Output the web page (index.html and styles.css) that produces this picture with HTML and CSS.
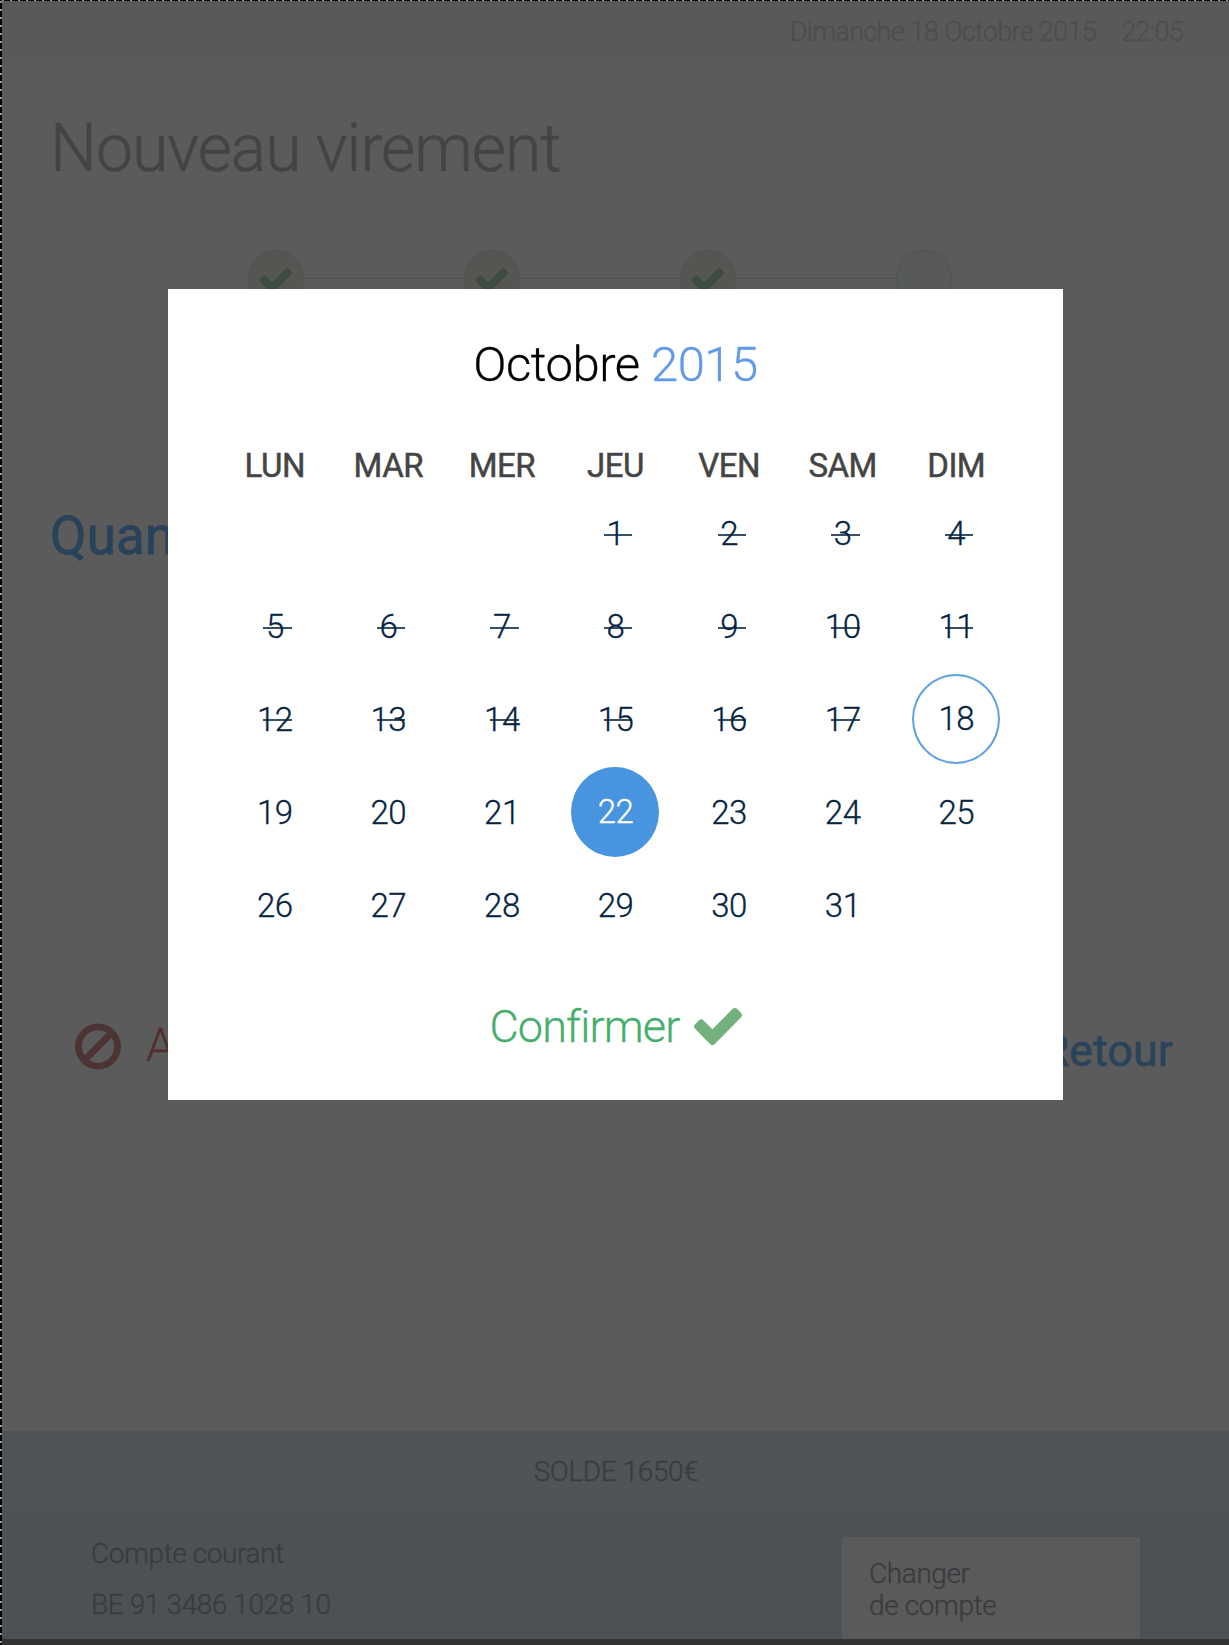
FILE: index.html
```html
<!DOCTYPE html>
<html lang="fr">
<head>
<meta charset="utf-8">
<title>Nouveau virement</title>
<link rel="stylesheet" href="styles.css">
</head>
<body>
<svg class="defs" aria-hidden="true">
  <symbol id="check" viewBox="121 334 1550 1188" preserveAspectRatio="none"><path d="M1671 566q0 40-28 68l-724 724-136 136q-28 28-68 28t-68-28l-136-136-362-362q-28-28-28-68t28-68l136-136q28-28 68-28t68 28l294 295 656-657q28-28 68-28t68 28l136 136q28 28 28 68z"/></symbol>
  <symbol id="ban" viewBox="128 125 1536 1536"><path d="M1440 893q0-161-87-295l-754 753q137 89 297 89 111 0 211.500-43.500t173.500-116.500 116-174.500 43-212.500zm-999 299l755-754q-135-91-300-91-148 0-273 73t-198 199-73 274q0 162 89 299zm1223-299q0 157-61 300t-163.500 246-245 164-298.500 61-298.500-61-245-164-163.500-246-61-300 61-299.500 163.500-245.500 245-164 298.500-61 298.500 61 245 164 163.500 245.500 61 299.500z"/></symbol>
</svg>
<div class="page">
  <header class="topbar"><span class="date">Dimanche 18 Octobre 2015</span><span class="time">22:05</span></header>
  <main class="content">
    <h1 class="title">Nouveau virement</h1>
    <div class="steps">
      <span class="step done"><svg class="step-check"><use href="#check"/></svg></span><i class="link"></i>
      <span class="step done"><svg class="step-check"><use href="#check"/></svg></span><i class="link"></i>
      <span class="step done"><svg class="step-check"><use href="#check"/></svg></span><i class="link"></i>
      <span class="step"></span>
    </div>
    <h2 class="question">Quand ?</h2>
    <div class="actions">
      <a class="cancel"><svg class="ban"><use href="#ban"/></svg>Annuler</a>
      <a class="back">Retour</a>
    </div>
  </main>
  <footer class="footer">
    <div class="balance">SOLDE 1650€</div>
    <div class="account">
      <div class="account-info"><div>Compte courant</div><div>BE 91 3486 1028 10</div></div>
      <div class="switch">Changer<br>de compte</div>
    </div>
  </footer>
</div>
<section class="modal">
  <h3 class="month">Octobre <span class="year">2015</span></h3>
  <div class="week head"><span>LUN</span><span>MAR</span><span>MER</span><span>JEU</span><span>VEN</span><span>SAM</span><span>DIM</span></div>
  <div class="week"><span></span><span></span><span></span><span class="past">1</span><span class="past">2</span><span class="past">3</span><span class="past">4</span></div>
  <div class="week"><span class="past">5</span><span class="past">6</span><span class="past">7</span><span class="past">8</span><span class="past">9</span><span class="past">10</span><span class="past">11</span></div>
  <div class="week"><span class="past">12</span><span class="past">13</span><span class="past">14</span><span class="past">15</span><span class="past">16</span><span class="past">17</span><span class="today">18</span></div>
  <div class="week"><span>19</span><span>20</span><span>21</span><span class="selected">22</span><span>23</span><span>24</span><span>25</span></div>
  <div class="week"><span>26</span><span>27</span><span>28</span><span>29</span><span>30</span><span>31</span><span></span></div>
  <div class="confirm">Confirmer<svg class="confirm-check"><use href="#check"/></svg></div>
</section>
<div class="edge-top"></div>
<div class="edge-left"></div>
</body>
</html>
```
FILE: styles.css
```css
* { box-sizing: border-box; }
body { margin: 0; position: relative; width: 1229px; height: 1645px; overflow: hidden; background: #333; font-family: Roboto, sans-serif; font-weight: 300; color: #45474a; -webkit-text-stroke: 0.3px currentColor; }
h1, h2, h3 { margin: 0; font-weight: 300; }
svg { display: block; fill: currentColor; flex: none; }
.defs { position: absolute; width: 0; height: 0; }
.page { height: 1639px; display: flex; flex-direction: column; background: #5b5b5b; }
.topbar { height: 62px; padding: 0 46px 0 0; display: flex; justify-content: flex-end; gap: 25px; background: #595959; font-size: 27px; line-height: 65px; letter-spacing: -0.7px; color: #4c4d50; white-space: nowrap; }
.content { flex: 1; padding-top: 48px; }
.title { padding-left: 50px; font-size: 66px; line-height: 78px; height: 78px; letter-spacing: -0.95px; color: #434445; -webkit-text-stroke-width: 0.6px; }
.steps { margin: 62px 0 0 248px; display: flex; align-items: center; }
.step { width: 56px; height: 56px; border: 1px solid #505554; border-radius: 50%; background: #575a59; display: flex; align-items: center; justify-content: center; }
.step.done { background: #555551; border-color: #515154; }
.step-check { width: 32px; height: 25px; color: #3d4b40; margin-top: 4px; }
.link { width: 160px; height: 1px; background: #4e4f4f; }
.question { margin-top: 198px; padding-left: 50px; font-size: 53px; line-height: 64px; font-weight: 400; letter-spacing: 0.2px; color: #29435a; -webkit-text-stroke-width: 0.8px; }
.actions { margin: 446px 56px 0 75px; display: flex; justify-content: space-between; align-items: center; height: 60px; }
.cancel { display: flex; align-items: center; font-size: 46px; padding-top: 2px; color: #502f2f; }
.ban { width: 46px; height: 47px; margin: 3px 25px 0 0; color: #4c3334; }
.back { font-size: 45px; font-weight: 400; color: #29435a; padding-top: 12px; -webkit-text-stroke-width: 0.6px; }
.footer { height: 208px; font-size: 28px; letter-spacing: -0.4px; color: #3a3b3e; }
.balance { height: 80px; text-align: center; line-height: 82px; background: #505456; padding-left: 3px; }
.account { height: 128px; background: #4e5153; display: flex; justify-content: space-between; align-items: flex-start; padding: 26px 89px 0 91px; overflow: hidden; }
.account-info { line-height: 51px; margin-top: -9px; }
.switch { width: 298px; height: 110px; border-radius: 4px; background: #5a5a5a; padding: 21px 27px; line-height: 32px; }
.modal { position: absolute; left: 168px; top: 289px; width: 895px; height: 811px; background: #fff; padding: 42px 50px 0; color: #05243f; }
.month { font-size: 49px; line-height: 68px; letter-spacing: -0.5px; text-align: center; color: #000; }
.year { color: #629ae8; }
.week { display: grid; grid-template-columns: repeat(7, 1fr); height: 92.800px; justify-items: center; align-items: center; font-size: 33px; letter-spacing: -0.5px; }
.week.head { margin-top: 45px; height: 42px; font-weight: 400; color: #444; -webkit-text-stroke-width: 0.5px; }
.head + .week { margin-top: 1.500px; }
.past { position: relative; }
.past::after { content: ""; position: absolute; left: calc(50% - 11.500px); top: 19.500px; width: 28.500px; height: 2px; background: #05243f; opacity: .8; }
.today, .selected { width: 88px; height: 90px; border-radius: 50%; line-height: 90px; text-align: center; }
.today { border: 2px solid #5fa1e3; line-height: 86px; }
.selected { background: #4994df; color: #fff; }
.confirm { margin-top: 45px; display: flex; justify-content: center; align-items: center; height: 60px; font-size: 45px; letter-spacing: -0.85px; color: #45ae6c; }
.confirm-check { width: 48px; height: 37px; margin-left: 14px; color: #72b17e; }
.edge-top { position: absolute; left: 0; top: 0; width: 100%; height: 1px; background: repeating-linear-gradient(90deg, #000 0 2px, #999 2px 4px, #000 4px 8px); }
.edge-left { position: absolute; left: 0; top: 0; width: 2px; height: 100%; background: repeating-linear-gradient(#000 0 1px, #999 1px 3px, #000 3px 8px); }
```
